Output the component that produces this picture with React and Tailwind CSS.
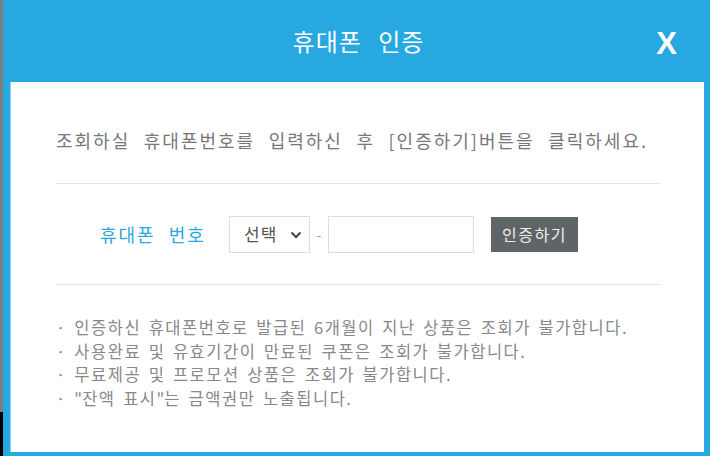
import React from "react";

const KR = { fontFamily: '"Noto Sans CJK KR", "Noto Sans", sans-serif' };

export default function App() {
  return (
    <div className="w-[710px] h-[456px] flex overflow-hidden" style={KR}>
      <div className="w-[3px] h-full flex flex-col">
        <div className="h-[412px] bg-[#7f7f7f]" />
        <div className="flex-1 bg-black" />
      </div>
      <div className="flex-1 flex flex-col bg-[#27a8e0]">
        <div className="h-[82px] flex items-center relative">
          <h1 className="flex-1 text-center text-white text-[24px] tracking-[1px] [word-spacing:10px] font-normal pb-[1px] pl-[4px]">
            휴대폰 인증
          </h1>
          <span
            className="absolute right-[33px] top-[28px] text-white text-[31px] font-bold leading-none"
            style={{ fontFamily: '"Liberation Sans", Arial, sans-serif' }}
          >
            X
          </span>
        </div>
        <div className="flex-1 flex flex-col bg-white ml-[7px] mr-[6px] mb-[4px] pl-[45px] pr-[44px] border-l border-[#8fd0ee]">
          <div className="h-[102px] flex items-end pb-[34px] border-b border-[#e3e3e3]">
            <p className="text-[18px] text-[#777] tracking-[2px] [word-spacing:7.5px] leading-none whitespace-nowrap">
              조회하실 휴대폰번호를 입력하신 후 [인증하기]버튼을 클릭하세요.
            </p>
          </div>
          <div className="h-[101px] flex items-center border-b border-[#e3e3e3] pl-[44px]">
            <span className="text-[18px] text-[#29a8e0] tracking-[2px] [word-spacing:7px] w-[129px]">휴대폰 번호</span>
            <div className="w-[81px] h-[37px] border border-[#dedede] flex items-center pl-[14px] pr-[7px] justify-between">
              <span className="text-[17px] text-[#555] tracking-[1px]">선택</span>
              <svg width="12" height="8" viewBox="0 0 12 8" className="mt-[2px]">
                <path d="M1.5 1.5 L6 6 L10.5 1.5" fill="none" stroke="#444" strokeWidth="2" />
              </svg>
            </div>
            <span className="text-[#999] text-[14px] w-[18px] text-center">-</span>
            <div className="w-[146px] h-[37px] border border-[#dedede]" />
            <button className="ml-[17px] w-[87px] h-[35px] bg-[#5f6566] text-[#eee] text-[16px] tracking-[1.5px] flex items-center justify-center">
              인증하기
            </button>
          </div>
          <div className="pt-[31px] text-[16.5px] text-[#888] leading-[23.7px] tracking-[1.5px] [word-spacing:2.4px] whitespace-nowrap">
            <p>· 인증하신 휴대폰번호로 발급된 6개월이 지난 상품은 조회가 불가합니다.</p>
            <p>· 사용완료 및 유효기간이 만료된 쿠폰은 조회가 불가합니다.</p>
            <p>· 무료제공 및 프로모션 상품은 조회가 불가합니다.</p>
            <p>
              · <span className="tracking-[0px]">"</span>잔액 표시<span className="tracking-[0px]">"</span>는 금액권만 노출됩니다.
            </p>
          </div>
        </div>
      </div>
    </div>
  );
}
